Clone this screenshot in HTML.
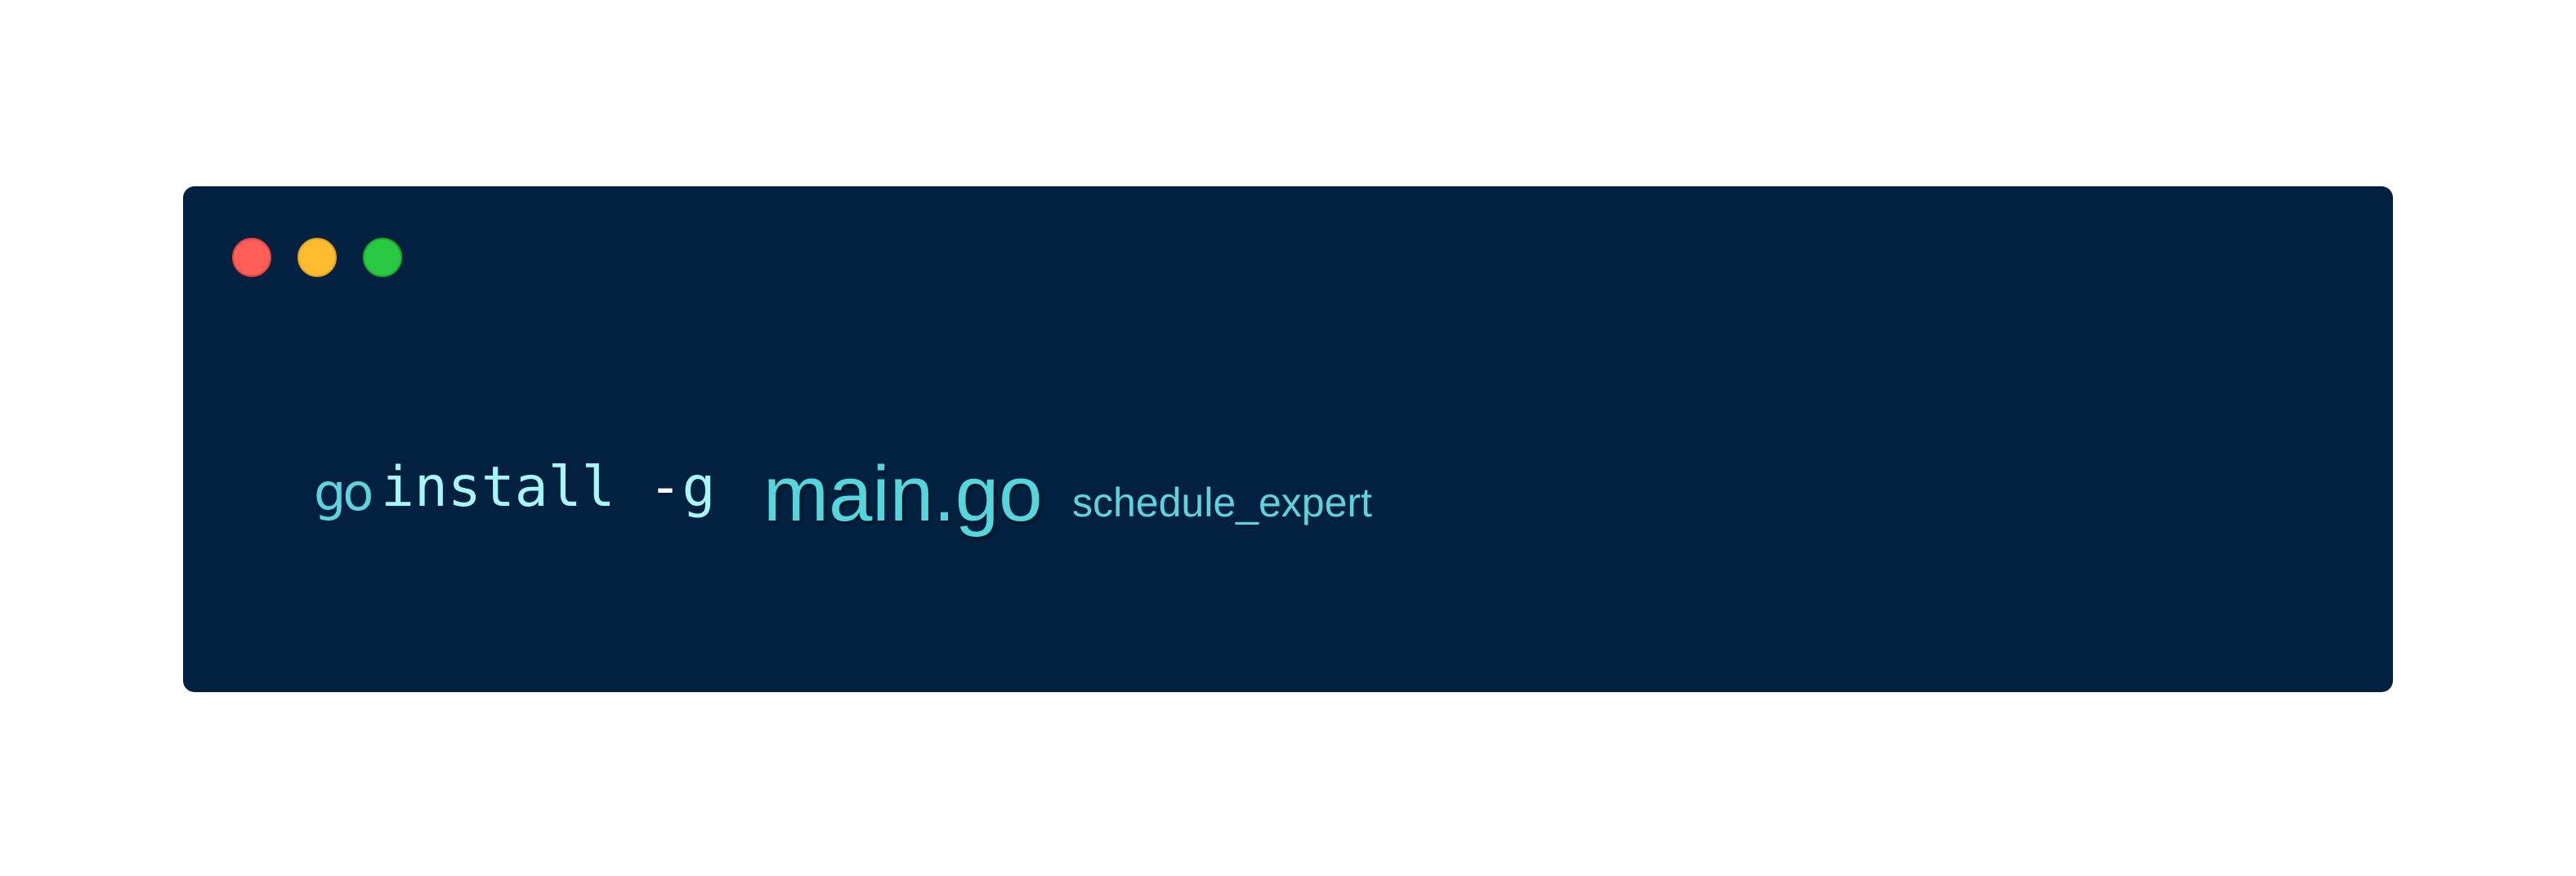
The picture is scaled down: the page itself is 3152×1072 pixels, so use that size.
<!DOCTYPE html>
<html><head><meta charset="utf-8"><style>
html,body{margin:0;padding:0;background:#fff;width:3152px;height:1072px;overflow:hidden;position:relative}
.win{position:absolute;left:224px;top:228px;width:2704px;height:619px;background:#022140;border-radius:14px}
.dot{position:absolute;top:291px;width:48px;height:48px;border-radius:50%;box-sizing:border-box}
.t{position:absolute;white-space:pre;line-height:1}
</style></head><body>
<div class="win"></div>
<div class="dot" style="left:284px;background:#ff5f57;border:2px solid #e0443e"></div>
<div class="dot" style="left:364px;background:#febc2e;border:2px solid #dea123"></div>
<div class="dot" style="left:444px;background:#28c840;border:2px solid #1aab29"></div>
<div class="t" style="left:384px;top:566px;font:62px 'DejaVu Sans','Liberation Sans',sans-serif;color:#5fd3dc;letter-spacing:-4px">go</div>
<div class="t" style="left:466px;top:557px;font:68px 'DejaVu Sans Mono','Liberation Mono',monospace;color:#a6f7ff;">install <span style="color:#fff">-</span>g</div>
<div class="t" style="left:934px;top:550px;font:96px 'Liberation Sans',sans-serif;color:#55d6dc;text-shadow:2px 3px 3px rgba(0,0,0,.45)">main.go</div>
<div class="t" style="left:1312px;top:586px;font:50px 'Liberation Sans',sans-serif;color:#5fd3dc;">schedule_expert</div>
</body></html>
